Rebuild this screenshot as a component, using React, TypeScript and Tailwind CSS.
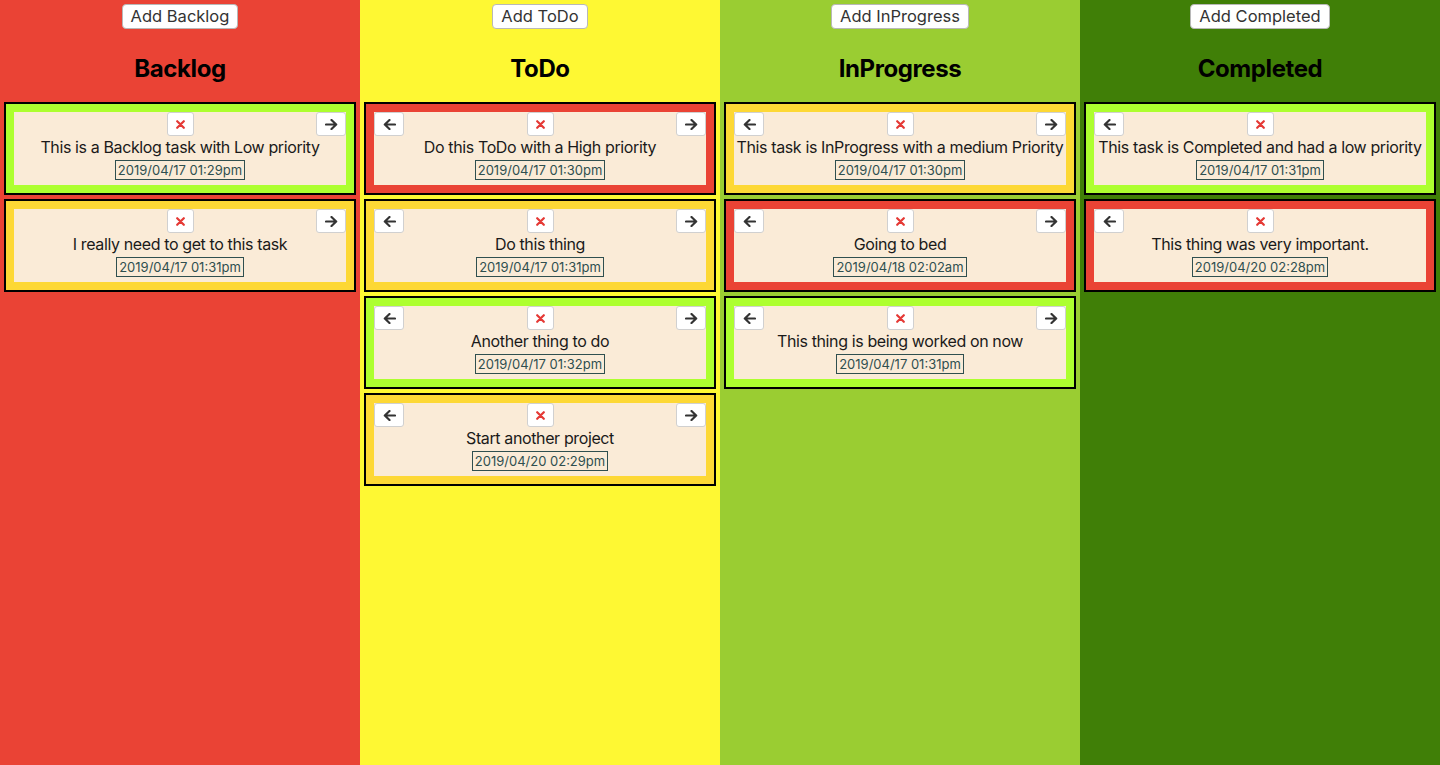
import React from "react";

type Task = { text: string; date: string; p: "low" | "med" | "high" };

const prColor: Record<Task["p"], string> = {
  low: "bg-[#adff2f]",
  med: "bg-[#fdd835]",
  high: "bg-[#ea4335]",
};

const columns: { name: string; bg: string; tasks: Task[] }[] = [
  {
    name: "Backlog",
    bg: "bg-[#ea4335]",
    tasks: [
      { text: "This is a Backlog task with Low priority", date: "2019/04/17 01:29pm", p: "low" },
      { text: "I really need to get to this task", date: "2019/04/17 01:31pm", p: "med" },
    ],
  },
  {
    name: "ToDo",
    bg: "bg-[#fef833]",
    tasks: [
      { text: "Do this ToDo with a High priority", date: "2019/04/17 01:30pm", p: "high" },
      { text: "Do this thing", date: "2019/04/17 01:31pm", p: "med" },
      { text: "Another thing to do", date: "2019/04/17 01:32pm", p: "low" },
      { text: "Start another project", date: "2019/04/20 02:29pm", p: "med" },
    ],
  },
  {
    name: "InProgress",
    bg: "bg-[#9acd32]",
    tasks: [
      { text: "This task is InProgress with a medium Priority", date: "2019/04/17 01:30pm", p: "med" },
      { text: "Going to bed", date: "2019/04/18 02:02am", p: "high" },
      { text: "This thing is being worked on now", date: "2019/04/17 01:31pm", p: "low" },
    ],
  },
  {
    name: "Completed",
    bg: "bg-[#407f07]",
    tasks: [
      { text: "This task is Completed and had a low priority", date: "2019/04/17 01:31pm", p: "low" },
      { text: "This thing was very important.", date: "2019/04/20 02:28pm", p: "high" },
    ],
  },
];

const Arrow = ({ dir }: { dir: "left" | "right" }) => (
  <svg width="13" height="11" viewBox="0 0 13 11" className={dir === "left" ? "" : "rotate-180"}>
    <path d="M12 5.5H2M6.5 1L1.8 5.5L6.5 10" fill="none" stroke="#333" strokeWidth="2.2" strokeLinecap="round" strokeLinejoin="round" />
  </svg>
);

const Cross = () => (
  <svg width="9" height="9" viewBox="0 0 9 9">
    <path d="M1.2 1.2L7.8 7.8M7.8 1.2L1.2 7.8" stroke="#e53935" strokeWidth="2.2" strokeLinecap="round" />
  </svg>
);

const btn = "h-[24px] flex items-center justify-center bg-white border border-[#d0d0d0] rounded-[3px]";

function Card({ t, first, last }: { t: Task; first: boolean; last: boolean }) {
  return (
    <div className={`border-2 border-black p-[8px] ${prColor[t.p]}`}>
      <div className="bg-[#faebd7] h-[73px] flex flex-col items-center">
        <div className="w-full grid grid-cols-[1fr_auto_1fr] h-[24px]">
          <div className="justify-self-start">
            {!first && (
              <div className={`${btn} w-[30px]`}>
                <Arrow dir="left" />
              </div>
            )}
          </div>
          <div className={`${btn} w-[27px]`}>
            <Cross />
          </div>
          <div className="justify-self-end">
            {!last && (
              <div className={`${btn} w-[30px]`}>
                <Arrow dir="right" />
              </div>
            )}
          </div>
        </div>
        <div className="text-[16px] leading-[22px] text-[#1a1a1a] whitespace-nowrap tracking-[-0.38px]">{t.text}</div>
        <div className="mt-[2px] border border-[#2f4f4f] text-[#2f4f4f] text-[13px] leading-[18px] px-[2px]">{t.date}</div>
      </div>
    </div>
  );
}

export default function App() {
  return (
    <div className="grid grid-cols-4 min-h-[765px]" style={{ fontFamily: "Inter, 'Noto Sans', sans-serif" }}>
      {columns.map((c, ci) => (
        <div key={c.name} className={`${c.bg} flex flex-col items-stretch pt-[4px]`}>
          <div className="flex justify-center">
            <div className="h-[25px] px-[8px] bg-white border border-[#b8b8b8] rounded-[4px] text-[16.5px] leading-[23px] text-[#333]">
              Add {c.name}
            </div>
          </div>
          <h2 className="mt-[25px] mb-[19px] text-center text-[24px] leading-[29px] font-bold text-black tracking-[-0.4px]">{c.name}</h2>
          <div className="flex flex-col gap-[4px] px-[4px]">
            {c.tasks.map((t, i) => (
              <Card key={i} t={t} first={ci === 0} last={ci === columns.length - 1} />
            ))}
          </div>
        </div>
      ))}
    </div>
  );
}
